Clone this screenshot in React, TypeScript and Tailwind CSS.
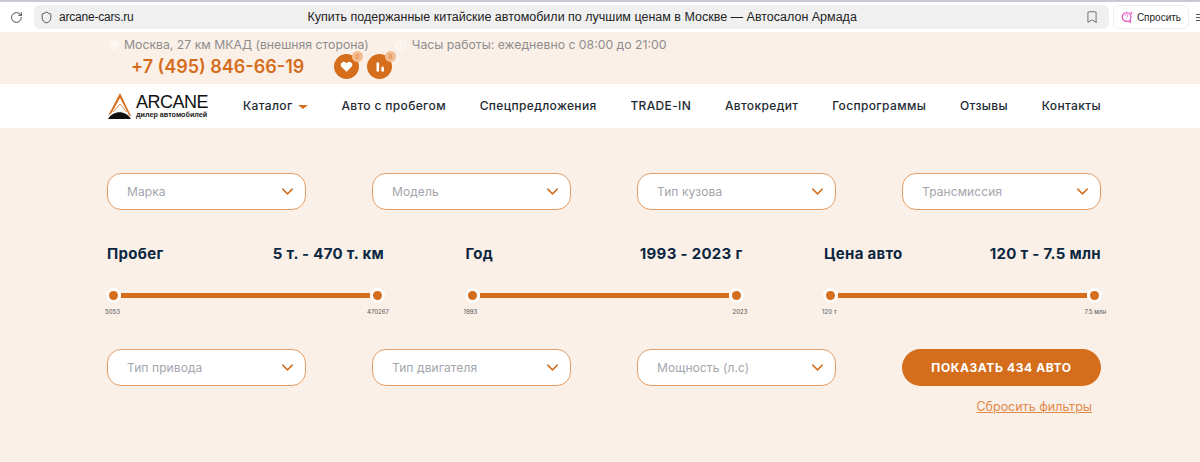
import React from 'react';
import { ChevronDown, Clock, MapPin, RotateCw, Shield, Bookmark } from 'lucide-react';

const navItems = ['Авто с пробегом', 'Спецпредложения', 'TRADE-IN', 'Автокредит', 'Госпрограммы', 'Отзывы', 'Контакты'];

const Select = ({ label }: { label: string }) => (
  <div className="flex h-[37px] w-[199px] items-center justify-between rounded-[14px] border-[1.5px] border-[#e39c63] bg-white pl-[19px] pr-[8px]">
    <span className="text-[12px] tracking-[0.1px] text-[#a3a6ad]">{label}</span>
    <ChevronDown className="h-[19px] w-[19px] text-[#d56e1c]" strokeWidth={1.8} />
  </div>
);

const Knob = () => (
  <span className="flex h-[15px] w-[15px] shrink-0 items-center justify-center rounded-full bg-white/80">
    <span className="h-[9px] w-[9px] rounded-full bg-[#d56e1c]" />
  </span>
);

const Range = ({ title, value, min, max }: { title: string; value: string; min: string; max: string }) => (
  <div className="w-[277px]">
    <div className="flex items-center justify-between text-[15px] font-bold leading-[20px] tracking-[0.3px] text-[#0b2740]">
      <span>{title}</span>
      <span>{value}</span>
    </div>
    <div className="-mx-[1px] mt-[24px] flex items-center">
      <Knob />
      <div className="h-[5px] flex-1 bg-[#d56e1c]" />
      <Knob />
    </div>
    <div className="mt-[5px] flex justify-between text-[6px] font-medium leading-[8px] text-[#666]">
      <span className="-ml-[2px]">{min}</span>
      <span className="-mr-[5px]">{max}</span>
    </div>
  </div>
);

const Round = ({ children }: { children: React.ReactNode }) => (
  <div className="relative flex h-[25px] w-[25px] items-center justify-center rounded-full bg-[#d56e1c]">
    {children}
    <span className="absolute -right-[4px] -top-[3px] flex h-[11px] w-[11px] items-center justify-center rounded-full bg-[#f3bd91] text-[6px] leading-none text-[#d56e1c]">0</span>
  </div>
);

export default function App() {
  return (
    <div className="h-[462px] w-[1200px] overflow-hidden bg-[#fbf0e8] font-['Inter','Liberation_Sans',sans-serif]">
      {/* browser bar */}
      <div className="flex h-[32px] items-center border-t-[2px] border-[#c9c9d2] bg-white">
        <RotateCw className="ml-[10px] h-[13px] w-[13px] text-[#333]" strokeWidth={1.6} />
        <div className="relative ml-[11px] flex h-[24px] w-[1077px] items-center rounded-[6px] bg-[#f0f0f1] pl-[6px] font-['Liberation_Sans',sans-serif] text-[12.5px] text-[#222]">
          <Shield className="h-[13px] w-[13px] text-[#444]" strokeWidth={1.6} />
          <span className="ml-[6px] text-[12px] tracking-[-0.2px]">arcane-cars.ru</span>
          <span className="ml-[174px]">Купить подержанные китайские автомобили по лучшим ценам в Москве — Автосалон Армада</span>
          <Bookmark className="absolute right-[10px] h-[14px] w-[14px] text-[#666]" strokeWidth={1.6} />
        </div>
        <div className="ml-[4px] flex h-[24px] w-[76px] items-center justify-end gap-[3px] rounded-[6px] border border-[#eee] pr-[7px] font-['Liberation_Sans',sans-serif] text-[10px] text-[#222]">
          <svg viewBox="0 0 16 16" className="h-[14px] w-[14px]" fill="none" stroke="#e65fc8" strokeWidth="1.500">
            <path d="M7.500 3a5 5 0 1 0 2 9.600L12 14l-.4-3A5 5 0 0 0 7.500 3z" />
            <path d="M6 6.500a1.500 1.500 0 1 1 2.200 1.400c-.5.300-.7.600-.7 1.100M7.500 10.500v.6" strokeWidth="1" />
            <path d="M13 1.500l.6 1.400L15 3.500l-1.400.6L13 5.500l-.6-1.400L11 3.500l1.400-.6z" fill="#e65fc8" stroke="none" />
          </svg>
          Спросить
        </div>
        <span className="ml-[7px] flex flex-col gap-[2px]">
          <span className="h-[1px] w-[4px] bg-[#555]" />
          <span className="h-[1px] w-[4px] bg-[#555]" />
          <span className="h-[1px] w-[4px] bg-[#555]" />
        </span>
      </div>

      {/* top contacts */}
      <div className="h-[52px] pl-[108px]">
        <div className="flex items-center pt-[5px] text-[12.25px] leading-[16px] text-[#8d8d8d]">
          <MapPin className="h-[11px] w-[11px] text-white" strokeWidth={2} />
          <span className="ml-[5px]">Москва, 27 км МКАД (внешняя сторона)</span>
          <Clock className="ml-[26px] h-[11px] w-[11px] text-white" strokeWidth={2} />
          <span className="ml-[6px]">Часы работы: ежедневно с 08:00 до 21:00</span>
        </div>
        <div className="flex items-center pt-[1px]">
          <span className="ml-[23px] w-[203px] text-[18px] font-semibold leading-[25px] text-[#d56e1c]">+7 (495) 846-66-19</span>
          <div className="flex gap-[8px]">
            <Round>
              <svg viewBox="0 0 16 16" className="h-[13px] w-[13px]" fill="white">
                <path d="M8 14.500 1.800 8.300a3.700 3.700 0 0 1 5.200-5.200l1 1 1-1a3.700 3.700 0 0 1 5.200 5.200z" />
              </svg>
            </Round>
            <Round>
              <svg viewBox="0 0 16 16" className="h-[14px] w-[14px]" fill="white">
                <rect x="4" y="2.500" width="3" height="11" rx="1.500" />
                <rect x="9.500" y="7.500" width="3" height="6" rx="1.500" />
              </svg>
            </Round>
          </div>
        </div>
      </div>

      {/* nav */}
      <nav className="flex h-[44px] items-center bg-white pl-[108px] pr-[99px]">
        <div className="relative w-[135px] leading-none">
          <svg viewBox="0 0 24 26" className="absolute left-0 top-[-1px] h-[26px] w-[24px]" fill="none">
            <path d="M0 23 12 0l11 23h-1.500L12 5 3.500 20z" fill="#d56e1c" />
            <path d="M5 19 12 11l6.500 8" stroke="#d56e1c" strokeWidth="0.8" />
            <path d="M0 26c5-9 18-9 23 0z" fill="#111" />
          </svg>
          <div className="ml-[28px] font-['Liberation_Sans',sans-serif] text-[18px] leading-[17px] tracking-[-0.5px] text-[#111]">ARCANE</div>
          <div className="ml-[28px] font-['Liberation_Sans',sans-serif] text-[7.200px] font-bold leading-[8px] text-[#222]">дилер автомобилей</div>
        </div>
        <div className="flex flex-1 items-center justify-between text-[12px] font-medium tracking-[0.35px] text-[#1d2a33]">
          <span className="flex items-center gap-[5px]">
            Каталог
            <span className="mt-[1px] h-0 w-0 border-x-[5px] border-t-[4px] border-x-transparent border-t-[#d56e1c]" />
          </span>
          {navItems.map((item) => (
            <span key={item}>{item}</span>
          ))}
        </div>
      </nav>

      {/* filters */}
      <div className="ml-[107px] w-[994px] pt-[45px]">
        <div className="flex justify-between">
          <Select label="Марка" />
          <Select label="Модель" />
          <Select label="Тип кузова" />
          <Select label="Трансмиссия" />
        </div>
        <div className="mt-[34px] flex justify-between">
          <Range title="Пробег" value="5 т. - 470 т. км" min="5053" max="470267" />
          <Range title="Год" value="1993 - 2023 г" min="1993" max="2023" />
          <Range title="Цена авто" value="120 т - 7.5 млн" min="120 т" max="7.5 млн" />
        </div>
        <div className="mt-[33px] flex justify-between">
          <Select label="Тип привода" />
          <Select label="Тип двигателя" />
          <Select label="Мощность (л.с)" />
          <div className="w-[199px]">
            <div className="flex h-[37px] items-center justify-center rounded-full bg-[#d56e1c] text-[12px] font-bold tracking-[0.6px] text-white">
              ПОКАЗАТЬ 434 АВТО
            </div>
            <div className="mt-[12px] pr-[9px] text-right text-[12.5px] text-[#e08a4a] underline">Сбросить фильтры</div>
          </div>
        </div>
      </div>
    </div>
  );
}
